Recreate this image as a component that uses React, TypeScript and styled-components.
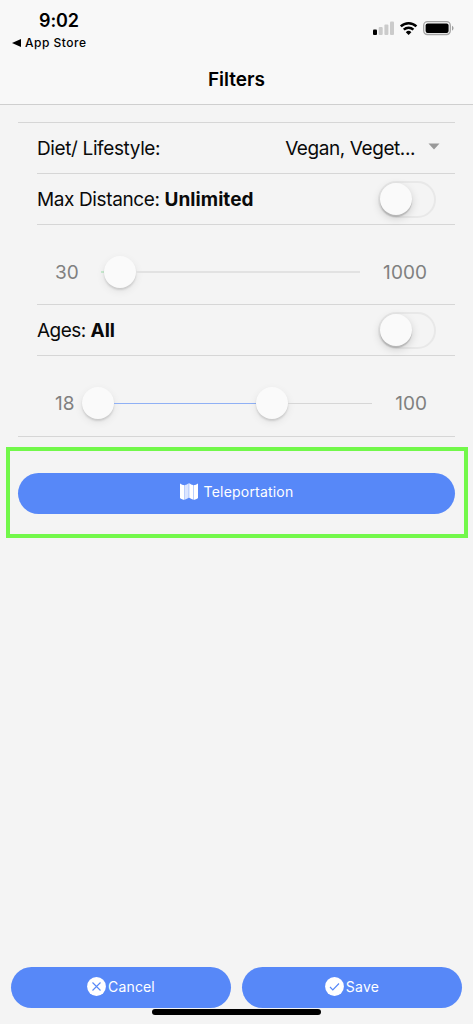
import React from 'react';
import styled, { createGlobalStyle } from 'styled-components';

const GlobalStyle = createGlobalStyle`
  * { box-sizing: border-box; }
  body { margin: 0; background: #f4f4f4; font-family: Inter, 'Liberation Sans', sans-serif; color: #0a0a0a; }
`;

const Screen = styled.div`
  position: relative;
  width: 473px;
  height: 1024px;
  display: flex;
  flex-direction: column;
  background: #f4f4f4;
  overflow: hidden;
`;

const Header = styled.header`
  height: 105px;
  flex: none;
  background: #f8f8f8;
  border-bottom: 1px solid #cfcfcf;
  display: flex;
  flex-direction: column;
`;

const StatusBar = styled.div`
  height: 55px;
  display: flex;
  justify-content: space-between;
  padding: 9px 19px 0 12px;
`;

const StatusLeft = styled.div`
  display: flex;
  flex-direction: column;
`;

const Clock = styled.div`
  padding-left: 27px;
  font-size: 18px;
  font-weight: 600;
  line-height: 24px;
  letter-spacing: -0.1px;
  color: #000;
`;

const BackLink = styled.div`
  display: flex;
  align-items: center;
  gap: 4px;
  line-height: 20px;
  font-size: 12px;
  font-weight: 500;
  letter-spacing: 0.5px;
  color: #000;
`;

const StatusIcons = styled.svg`
  width: 82px;
  height: 18px;
  margin-top: 10px;
`;

const Title = styled.h1`
  margin: 0;
  font-size: 19px;
  font-weight: 600;
  line-height: 49px;
  text-align: center;
  color: #000;
`;

const List = styled.section`
  margin: 17px 18px 0;
  border-top: 1px solid #d6d6d6;
  border-bottom: 1px solid #d6d6d6;
  padding-left: 19px;
`;

const Row = styled.div<{ $height: number; $last?: boolean }>`
  height: ${(p) => p.$height}px;
  display: flex;
  align-items: center;
  justify-content: space-between;
  border-bottom: ${(p) => (p.$last ? 'none' : '1px solid #d6d6d6')};
  padding-right: 19px;
`;

const Label = styled.span<{ $spacing?: number }>`
  font-size: 19px;
  line-height: 26px;
  padding-top: 2px;
  letter-spacing: ${(p) => p.$spacing ?? -0.38}px;
  white-space: pre;
  b { font-weight: 700; letter-spacing: 0.05px; }
`;

const Select = styled.div`
  display: flex;
  align-items: center;
  gap: 13px;
  margin-right: -4px;
`;

const Caret = styled.svg`
  width: 12px;
  height: 7px;
  margin-top: -3px;
`;

const Toggle = styled.div`
  width: 58px;
  height: 37px;
  border-radius: 19px;
  border: 2px solid #e8e8e8;
  display: flex;
  align-items: center;
`;

const Knob = styled.div`
  width: 32px;
  height: 32px;
  flex: none;
  border-radius: 50%;
  background: #fafafa;
  box-shadow: 0 2px 2px rgba(0, 0, 0, 0.12), 0 3px 8px rgba(0, 0, 0, 0.08);
`;

const ToggleKnob = styled(Knob)`
  box-shadow: 0 2px 1px rgba(0, 0, 0, 0.16), 0 3px 9px rgba(0, 0, 0, 0.17);
`;

const SliderRow = styled(Row)`
  padding: 14px 28px 0 18px;
`;

const Bound = styled.span<{ $width: number; $right?: boolean }>`
  width: ${(p) => p.$width}px;
  flex: none;
  font-size: 19px;
  line-height: 26px;
  padding-top: 2px;
  letter-spacing: 0.05px;
  text-align: ${(p) => (p.$right ? 'right' : 'left')};
  color: #808080;
`;

const Track = styled.div`
  flex: 1;
  height: 32px;
  display: flex;
  align-items: center;
`;

const Line = styled.div<{ $color: string; $thick?: number; $width?: number }>`
  ${(p) => (p.$width ? `width: ${p.$width}px; flex: none;` : 'flex: 1;')}
  height: ${(p) => p.$thick ?? 1}px;
  background: ${(p) => p.$color};
`;

const Highlight = styled.div`
  margin: 10px 5px 0 6px;
  height: 91px;
  border: 4px solid #72f84a;
  padding: 22px 9px 0 8px;
`;

const Button = styled.button<{ $lift?: number; $spacing?: number }>`
  width: 100%;
  height: 41px;
  border: none;
  border-radius: 21px;
  background: #5788f8;
  color: #fff;
  font-family: inherit;
  font-size: 14px;
  letter-spacing: ${(p) => p.$spacing ?? 0.25}px;
  padding: 0 0 ${(p) => p.$lift ?? 2}px;
  display: flex;
  align-items: center;
  justify-content: center;
`;

const MapIcon = styled.svg`
  width: 18px;
  height: 17px;
  margin: -1px 6px 0 0;
`;

const RoundIcon = styled.svg`
  width: 19px;
  height: 19px;
  margin-right: 2px;
`;

const Footer = styled.footer`
  margin-top: auto;
  padding: 0 11px 16px;
  display: grid;
  grid-template-columns: 1fr 1fr;
  gap: 11px;
`;

const HomeBar = styled.div`
  position: absolute;
  left: 152px;
  bottom: 9px;
  width: 169px;
  height: 6px;
  border-radius: 3px;
  background: #000;
`;

export default function App() {
  return (
    <Screen>
      <GlobalStyle />
      <Header>
        <StatusBar>
          <StatusLeft>
            <Clock>9:02</Clock>
            <BackLink>
              <svg width="9" height="8" viewBox="0 0 9 8"><path d="M0 4 9 0v8z" /></svg>
              App Store
            </BackLink>
          </StatusLeft>
          <StatusIcons viewBox="372 19 82 18">
            <rect x="373" y="29.5" width="4" height="5.5" rx="1" />
            <g fill="#cbcbcb">
              <rect x="378.7" y="27" width="4" height="8" rx="1" />
              <rect x="384.4" y="24.5" width="4" height="10.5" rx="1" />
              <rect x="390" y="21.5" width="4" height="13.5" rx="1" />
            </g>
            <g fill="none" stroke="#000" strokeWidth="2.5">
              <path d="M400.8 26.4a11.2 11.2 0 0 1 15.6 0" />
              <path d="M403.8 29.7a7 7 0 0 1 9.6 0" />
            </g>
            <path d="M408.6 35l-2.8-2.8a4 4 0 0 1 5.6 0z" />
            <rect x="423.7" y="21.7" width="26.6" height="12.8" rx="3.7" fill="none" stroke="#a5a5a5" strokeWidth="1.3" />
            <rect x="425.6" y="23.4" width="23" height="9.6" rx="2" />
            <path d="M452 25.8c2 .8 2 4 0 4.8z" fill="#a0a0a0" />
          </StatusIcons>
        </StatusBar>
        <Title>Filters</Title>
      </Header>

      <List>
        <Row $height={51}>
          <Label>Diet/ Lifestyle:</Label>
          <Select>
            <Label $spacing={-0.42}>Vegan, Veget...</Label>
            <Caret viewBox="0 0 12 7"><path d="M.5.5h11L6 6.5z" fill="#999" /></Caret>
          </Select>
        </Row>
        <Row $height={51}>
          <Label>Max Distance: <b>Unlimited</b></Label>
          <Toggle><ToggleKnob /></Toggle>
        </Row>
        <SliderRow $height={80}>
          <Bound $width={46}>30</Bound>
          <Track>
            <Line $color="#c9ebd0" $thick={2} $width={3} />
            <Knob />
            <Line $color="#e2e2e2" $thick={2} />
          </Track>
          <Bound $width={67} $right>1000</Bound>
        </SliderRow>
        <Row $height={51}>
          <Label $spacing={-0.55}>Ages: <b>All</b></Label>
          <Toggle><ToggleKnob /></Toggle>
        </Row>
        <SliderRow $height={80} $last>
          <Bound $width={27}>18</Bound>
          <Track>
            <Knob />
            <Line $color="#8fb0f5" $width={142} />
            <Knob />
            <Line $color="#d6d6d6" />
          </Track>
          <Bound $width={55} $right>100</Bound>
        </SliderRow>
      </List>

      <Highlight>
        <Button $lift={4} $spacing={0.2}>
          <MapIcon viewBox="0 0 18 17">
            <path d="M0 .5C1 1.3 3 2.2 4.6 2.2v14.6C3 16.8 1 15.9 0 15zM13.4 2.2C15 2.2 17 1.3 18 .5V15c-1 .9-3 1.8-4.6 1.8z" fill="#fff" />
            <path d="M5 2.1C6.3 1.9 7.5.9 8.8.2v14.6C7.5 15.5 6.3 16.4 5 16.6z" fill="#dce6ff" />
            <path d="M9.2.2C10.5.9 11.7 1.9 13 2.1v14.5c-1.3-.2-2.5-1.1-3.8-1.8z" fill="#fff" />
          </MapIcon>
          Teleportation
        </Button>
      </Highlight>

      <Footer>
        <Button $spacing={0.15}>
          <RoundIcon viewBox="0 0 19 19">
            <circle cx="9.5" cy="9.5" r="9.4" fill="#fff" />
            <path d="M5.5 5.5l8 8m0-8l-8 8" stroke="#5788f8" strokeWidth="1.1" />
          </RoundIcon>
          Cancel
        </Button>
        <Button $spacing={0.3}>
          <RoundIcon viewBox="0 0 19 19">
            <circle cx="9.5" cy="9.5" r="9.4" fill="#fff" />
            <path d="M5 10l2.8 2.8L14 6.5" fill="none" stroke="#5788f8" strokeWidth="1.2" />
          </RoundIcon>
          Save
        </Button>
      </Footer>
      <HomeBar />
    </Screen>
  );
}
